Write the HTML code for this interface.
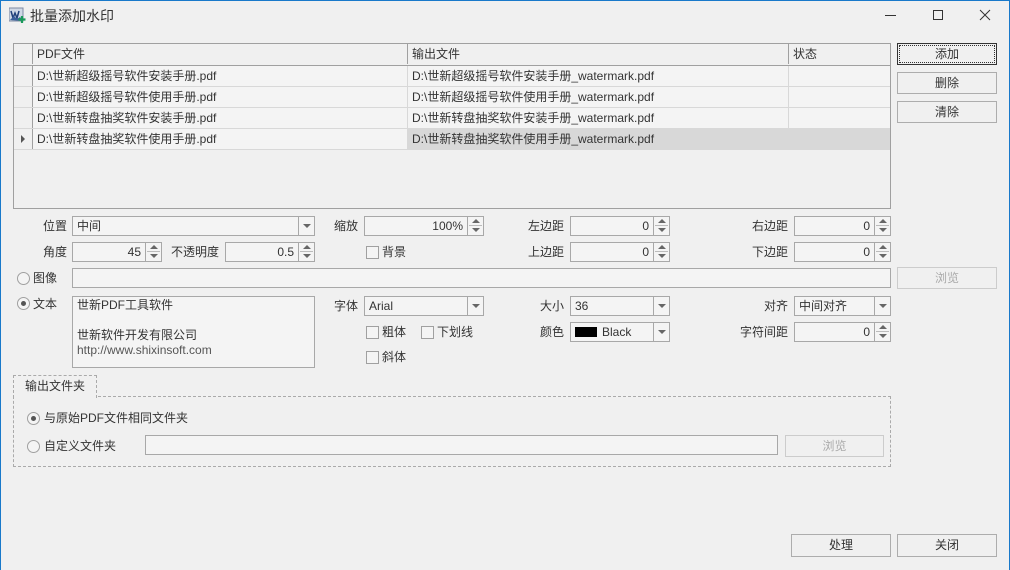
<!DOCTYPE html>
<html><head><meta charset="utf-8"><style>
*{box-sizing:border-box;margin:0;padding:0}
body{width:1010px;height:570px;background:#f0f0f0;font-family:"Liberation Sans","Noto Sans CJK SC",sans-serif;font-size:12px;color:#333;position:relative;overflow:hidden}
.a{position:absolute}
.frame{left:0;top:0;width:1010px;height:570px;border:1px solid #1979ca;border-bottom:none}
.lbl{position:absolute;line-height:20px;white-space:nowrap;color:#333}
.r{text-align:right}
.box{position:absolute;border:1px solid #a8a8a8;background:#f4f4f4;height:20px;line-height:18px;padding:0 4px;white-space:nowrap}
.dd{position:absolute;right:0;top:0;width:16px;height:18px;border-left:1px solid #a8a8a8}
.dd:after{content:"";position:absolute;left:4px;top:7px;border-left:4px solid transparent;border-right:4px solid transparent;border-top:4px solid #666}
.sp{position:absolute;right:0;top:0;width:16px;height:18px;border-left:1px solid #a8a8a8}
.sp:before{content:"";position:absolute;left:4px;top:2px;border-left:4px solid transparent;border-right:4px solid transparent;border-bottom:4px solid #666}
.sp:after{content:"";position:absolute;left:4px;top:11px;border-left:4px solid transparent;border-right:4px solid transparent;border-top:4px solid #666}
.sp i{position:absolute;left:1px;right:1px;top:8px;border-top:1px solid #bbb}
.num{text-align:right;padding-right:20px}
.btn{position:absolute;border:1px solid #adadad;background:#f0f0f0;text-align:center;line-height:20px;height:22px;color:#333}
.dis{color:#aaa;border-color:#ccc}
.cb{position:absolute;width:13px;height:13px;border:1px solid #a0a0a0;background:#f4f4f4}
.rd{position:absolute;width:13px;height:13px;border:1px solid #a0a0a0;border-radius:50%;background:#f4f4f4}
.rd.on:after{content:"";position:absolute;left:3px;top:3px;width:5px;height:5px;border-radius:50%;background:#555}
.grid{left:13px;top:43px;width:878px;height:166px;border:1px solid #a0a0a0;background:#f0f0f0}
.row{position:absolute;left:0;width:876px;height:21px;border-bottom:1px solid #d8d8d8;background:#f4f4f4}
.c{position:absolute;top:0;height:20px;line-height:20px;padding-left:4px;white-space:nowrap;border-right:1px solid #d8d8d8}
</style></head><body>
<div class="a frame"></div>
<svg class="a" style="left:9px;top:7px" width="17" height="17" viewBox="0 0 17 17"><rect x="0" y="1" width="14" height="13" fill="#cfd8e6" stroke="#7d8aa3"/><path d="M2 4l2 7 2-5 2 5 2-7" stroke="#1f3f7a" stroke-width="1.5" fill="none"/><path d="M1 13l4-4 3 3 3-2 3 4z" fill="#3a5f9b"/><path d="M13 9v7M9.5 12.5h7" stroke="#1a9a5a" stroke-width="2.2"/></svg>
<div class="lbl" style="left:30px;top:5px;font-size:14px;line-height:22px">批量添加水印</div>
<div class="a" style="left:885px;top:15px;width:11px;border-top:1px solid #333"></div>
<div class="a" style="left:933px;top:10px;width:10px;height:10px;border:1px solid #333"></div>
<svg class="a" style="left:979px;top:9px" width="12" height="12"><path d="M1 1l10 10M11 1L1 11" stroke="#333" stroke-width="1"/></svg>

<div class="a grid">
 <div class="row" style="top:0;height:22px;background:#f0f0f0;border-bottom:1px solid #a0a0a0">
  <div class="c" style="left:0;width:19px;border-right:1px solid #a0a0a0"></div>
  <div class="c" style="left:19px;width:375px;border-right:1px solid #a0a0a0">PDF文件</div>
  <div class="c" style="left:394px;width:381px;border-right:1px solid #a0a0a0">输出文件</div>
  <div class="c" style="left:775px;width:101px;border:none">状态</div>
 </div>
 <div class="row" style="top:22px"><div class="c" style="left:0;width:19px;border-right:1px solid #a0a0a0;background:#f0f0f0"></div><div class="c" style="left:19px;width:375px">D:\世新超级摇号软件安装手册.pdf</div><div class="c" style="left:394px;width:381px">D:\世新超级摇号软件安装手册_watermark.pdf</div></div>
 <div class="row" style="top:43px"><div class="c" style="left:0;width:19px;border-right:1px solid #a0a0a0;background:#f0f0f0"></div><div class="c" style="left:19px;width:375px">D:\世新超级摇号软件使用手册.pdf</div><div class="c" style="left:394px;width:381px">D:\世新超级摇号软件使用手册_watermark.pdf</div></div>
 <div class="row" style="top:64px"><div class="c" style="left:0;width:19px;border-right:1px solid #a0a0a0;background:#f0f0f0"></div><div class="c" style="left:19px;width:375px">D:\世新转盘抽奖软件安装手册.pdf</div><div class="c" style="left:394px;width:381px">D:\世新转盘抽奖软件安装手册_watermark.pdf</div></div>
 <div class="row" style="top:85px;border-bottom:1px solid #d8d8d8"><div class="c" style="left:0;width:19px;border-right:1px solid #a0a0a0;background:#f0f0f0"><span style="position:absolute;left:7px;top:6px;border-top:4px solid transparent;border-bottom:4px solid transparent;border-left:4px solid #555"></span></div><div class="c" style="left:19px;width:375px">D:\世新转盘抽奖软件使用手册.pdf</div><div class="c" style="left:394px;width:482px;background:#d8d8d8;border:none">D:\世新转盘抽奖软件使用手册_watermark.pdf</div></div>
</div>

<div class="btn" style="left:897px;top:43px;width:100px;border:1px solid #333;outline:1px dotted #333;outline-offset:-3px">添加</div>
<div class="btn" style="left:897px;top:72px;width:100px">删除</div>
<div class="btn" style="left:897px;top:101px;width:100px">清除</div>

<div class="lbl r" style="left:20px;width:47px;top:216px">位置</div>
<div class="box" style="left:72px;top:216px;width:243px">中间<div class="dd"></div></div>
<div class="lbl" style="left:334px;top:216px">缩放</div>
<div class="box num" style="left:364px;top:216px;width:120px">100%<div class="sp"><i></i></div></div>
<div class="lbl r" style="left:500px;width:64px;top:216px">左边距</div>
<div class="box num" style="left:570px;top:216px;width:100px">0<div class="sp"><i></i></div></div>
<div class="lbl r" style="left:720px;width:68px;top:216px">右边距</div>
<div class="box num" style="left:794px;top:216px;width:97px">0<div class="sp"><i></i></div></div>

<div class="lbl r" style="left:20px;width:47px;top:242px">角度</div>
<div class="box num" style="left:72px;top:242px;width:90px">45<div class="sp"><i></i></div></div>
<div class="lbl" style="left:171px;top:242px">不透明度</div>
<div class="box num" style="left:225px;top:242px;width:90px">0.5<div class="sp"><i></i></div></div>
<div class="cb" style="left:366px;top:246px"></div><div class="lbl" style="left:382px;top:242px">背景</div>
<div class="lbl r" style="left:500px;width:64px;top:242px">上边距</div>
<div class="box num" style="left:570px;top:242px;width:100px">0<div class="sp"><i></i></div></div>
<div class="lbl r" style="left:720px;width:68px;top:242px">下边距</div>
<div class="box num" style="left:794px;top:242px;width:97px">0<div class="sp"><i></i></div></div>

<div class="rd" style="left:17px;top:272px"></div><div class="lbl" style="left:33px;top:268px">图像</div>
<div class="box" style="left:72px;top:268px;width:819px"></div>
<div class="btn dis" style="left:897px;top:267px;width:100px">浏览</div>

<div class="rd on" style="left:17px;top:297px"></div><div class="lbl" style="left:33px;top:294px">文本</div>
<div class="box" style="left:72px;top:296px;width:243px;height:72px;line-height:15px;padding-top:1px;white-space:normal">世新PDF工具软件<br><br>世新软件开发有限公司<br><span style="color:#555">http://www.shixinsoft.com</span></div>
<div class="lbl" style="left:334px;top:296px">字体</div>
<div class="box" style="left:364px;top:296px;width:120px">Arial<div class="dd"></div></div>
<div class="lbl r" style="left:500px;width:64px;top:296px">大小</div>
<div class="box" style="left:570px;top:296px;width:100px">36<div class="dd"></div></div>
<div class="lbl r" style="left:720px;width:68px;top:296px">对齐</div>
<div class="box" style="left:794px;top:296px;width:97px">中间对齐<div class="dd"></div></div>

<div class="cb" style="left:366px;top:326px"></div><div class="lbl" style="left:382px;top:322px">粗体</div>
<div class="cb" style="left:421px;top:326px"></div><div class="lbl" style="left:437px;top:322px">下划线</div>
<div class="lbl r" style="left:500px;width:64px;top:322px">颜色</div>
<div class="box" style="left:570px;top:322px;width:100px"><span style="display:inline-block;width:22px;height:10px;background:#000;vertical-align:-1px;margin-right:5px"></span>Black<div class="dd"></div></div>
<div class="lbl r" style="left:720px;width:68px;top:322px">字符间距</div>
<div class="box num" style="left:794px;top:322px;width:97px">0<div class="sp"><i></i></div></div>
<div class="cb" style="left:366px;top:351px"></div><div class="lbl" style="left:382px;top:347px">斜体</div>

<div class="a" style="left:13px;top:396px;width:878px;height:71px;border:1px dashed #aaa"></div>
<div class="a" style="left:13px;top:375px;width:84px;height:23px;border:1px dashed #aaa;border-bottom:none;background:#f0f0f0;line-height:21px;padding-left:11px">输出文件夹</div>
<div class="rd on" style="left:27px;top:412px"></div><div class="lbl" style="left:44px;top:408px">与原始PDF文件相同文件夹</div>
<div class="rd" style="left:27px;top:440px"></div><div class="lbl" style="left:44px;top:436px">自定义文件夹</div>
<div class="box" style="left:145px;top:435px;width:633px"></div>
<div class="btn dis" style="left:785px;top:435px;width:99px">浏览</div>

<div class="btn" style="left:791px;top:534px;width:100px;height:23px">处理</div>
<div class="btn" style="left:897px;top:534px;width:100px;height:23px">关闭</div>
</body></html>
